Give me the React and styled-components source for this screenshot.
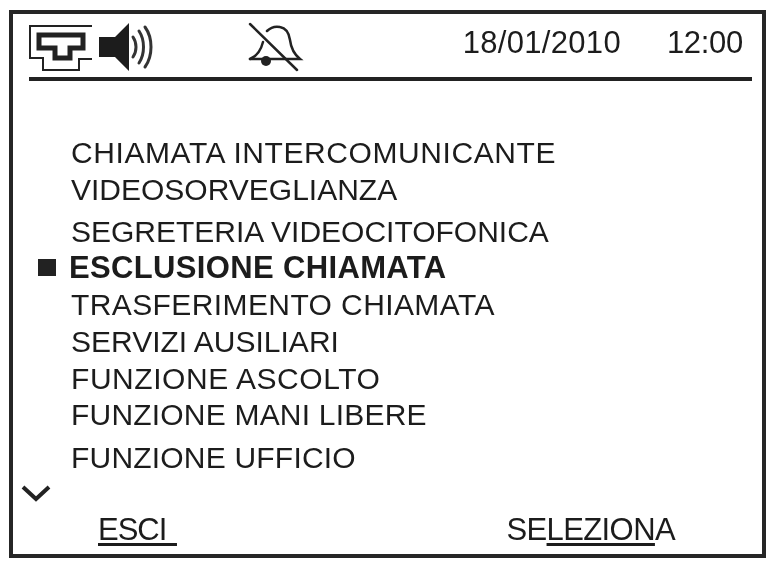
import React from "react";
import styled, { createGlobalStyle } from "styled-components";

const GlobalStyle = createGlobalStyle`
  html, body {
    margin: 0;
    background: #fff;
    overflow: hidden;
  }
  body {
    font-family: "Liberation Sans", Arial, sans-serif;
    color: #1c1c1c;
  }
`;

const Page = styled.div`
  width: 768px;
  height: 565px;
  padding: 10px 2px 7px 9px;
  box-sizing: border-box;
`;

const Screen = styled.div`
  height: 100%;
  box-sizing: border-box;
  border: 4px solid #262626;
  display: flex;
  flex-direction: column;
  filter: blur(0.5px);
`;

const StatusBar = styled.div`
  height: 63px;
  margin: 0 10px 0 16px;
  border-bottom: 4px solid #222;
  display: flex;
  align-items: center;
  box-sizing: content-box;
`;

const NetworkIcon = styled.svg`
  width: 66px;
  height: 50px;
  margin-top: 3px;
`;

const SpeakerIcon = styled.svg`
  width: 60px;
  height: 52px;
  margin: 3px 0 0 1px;
`;

const BellIcon = styled.svg`
  width: 58px;
  height: 52px;
  margin: 3px 0 0 90px;
`;

const Clock = styled.div`
  margin-left: auto;
  display: flex;
  gap: 46px;
  font-size: 31px;
  line-height: 34px;
  padding: 0 9px 6px 0;
`;

const DateText = styled.span`
  letter-spacing: 0.3px;
`;

const TimeText = styled.span`
  letter-spacing: -0.3px;
`;

const Menu = styled.ul`
  list-style: none;
  margin: 0;
  padding: 54px 0 0 58px;
`;

const MenuItem = styled.li`
  position: relative;
  font-size: ${(p) => (p.$active ? 31 : 30)}px;
  line-height: 33px;
  margin-top: ${(p) => p.$gap}px;
  font-weight: ${(p) => (p.$active ? 700 : 400)};
  margin-left: ${(p) => (p.$active ? -2 : 0)}px;
  letter-spacing: ${(p) => p.$spacing || 0}px;
`;

const Marker = styled.span`
  position: absolute;
  left: -31px;
  top: 8px;
  width: 18px;
  height: 17px;
  background: #222;
`;

const MoreIcon = styled.svg`
  width: 30px;
  height: 20px;
  margin: 10px 0 0 8px;
  display: block;
`;

const Footer = styled.div`
  display: flex;
  justify-content: space-between;
  padding: 9px 87px 0 85px;
  font-size: 31px;
  line-height: 34px;
`;

const SoftKey = styled.span`
  text-decoration: underline;
  text-decoration-thickness: 3px;
  text-underline-offset: 3px;
  letter-spacing: ${(p) => p.$spacing}px;
  word-spacing: ${(p) => p.$wordSpacing || 0}px;
  white-space: pre;
`;

const Plain = styled.span`
  display: inline-block;
  letter-spacing: -0.6px;
`;

const items = [
  { label: "CHIAMATA INTERCOMUNICANTE", gap: 1, spacing: 0.58 },
  { label: "VIDEOSORVEGLIANZA", gap: 4 },
  { label: "SEGRETERIA VIDEOCITOFONICA", gap: 9 },
  { label: "ESCLUSIONE CHIAMATA", gap: 3, spacing: 0.35, active: true },
  { label: "TRASFERIMENTO CHIAMATA", gap: 4, spacing: 0.4 },
  { label: "SERVIZI AUSILIARI", gap: 4 },
  { label: "FUNZIONE ASCOLTO", gap: 4, spacing: 0.55 },
  { label: "FUNZIONE MANI LIBERE", gap: 3, spacing: 0.2 },
  { label: "FUNZIONE UFFICIO", gap: 10, spacing: 0.2 },
];

export default function App() {
  return (
    <Page>
      <GlobalStyle />
      <Screen>
        <StatusBar>
          <NetworkIcon viewBox="0 0 66 50">
            <path
              d="M63 4H1v32h13v12h36V37h13"
              fill="none"
              stroke="#222"
              strokeWidth="2"
            />
            <path
              d="M10 13H54V26H41V36H26V26H10z"
              fill="none"
              stroke="#222"
              strokeWidth="5"
            />
          </NetworkIcon>
          <SpeakerIcon viewBox="0 0 60 52">
            <path d="M3 16h16L33 2v48L19 36H3z" fill="#1c1c1c" />
            <g fill="none" stroke="#333" strokeLinecap="round">
              <path d="M37 16c4 6 4 14 0 20" strokeWidth="3" />
              <path d="M43 10c6 9 6 23 0 32" strokeWidth="3" />
              <path d="M49 6c8 11 8 29 0 40" strokeWidth="3" />
            </g>
          </SpeakerIcon>
          <BellIcon viewBox="0 0 58 52">
            <g fill="none" stroke="#222" strokeWidth="2.500" strokeLinecap="round">
              <path d="M4 38c7-3 11-9 13-17" />
              <path d="M21 10c3-3 8-5 13-4 6 1 9 6 10 13 1 8 5 15 10 19H4" />
              <path d="M4 3l47 46" />
            </g>
            <circle cx="20" cy="40" r="5" fill="#222" />
          </BellIcon>
          <Clock>
            <DateText>18/01/2010</DateText>
            <TimeText>12:00</TimeText>
          </Clock>
        </StatusBar>
        <Menu>
          {items.map((item) => (
            <MenuItem
              key={item.label}
              $gap={item.gap}
              $active={item.active}
              $spacing={item.spacing}
            >
              {item.active && <Marker />}
              {item.label}
            </MenuItem>
          ))}
        </Menu>
        <MoreIcon viewBox="0 0 30 20">
          <path d="M2 3l13 12L28 3" fill="none" stroke="#222" strokeWidth="4" />
        </MoreIcon>
        <Footer>
          <SoftKey $spacing={-1} $wordSpacing={3}>ESCI </SoftKey>
          <span>
            <Plain>SE</Plain>
            <SoftKey $spacing={-0.6}>LEZION</SoftKey>
            <Plain>A</Plain>
          </span>
        </Footer>
      </Screen>
    </Page>
  );
}
